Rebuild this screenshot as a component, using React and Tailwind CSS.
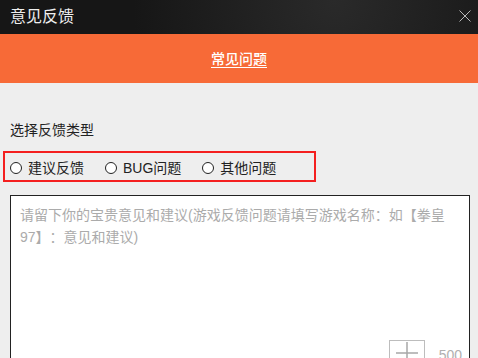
import React from 'react';

const TYPES = ['建议反馈', 'BUG问题', '其他问题'];

const FONT = { fontFamily: '"Liberation Sans", "Noto Sans CJK SC", sans-serif' };

function Radio({ label }) {
  return (
    <label className="flex items-center gap-[6px] text-[14px] leading-[20px] text-[#222]">
      <span className="w-[12px] h-[12px] rounded-full border border-[#222] bg-white" />
      {label}
    </label>
  );
}

export default function App() {
  return (
    <div className="w-[478px] h-[358px] overflow-hidden bg-[#eeeeee]" style={FONT}>
      <div className="h-[34px] flex items-center justify-between pl-[10px] pr-[7px] bg-[radial-gradient(circle_at_70%_0%,#2a2a2a,#161616_60%)]">
        <span className="text-[16px] leading-[20px] text-[#eeeeee]">意见反馈</span>
        <svg width="12" height="12" viewBox="0 0 12 12" className="mb-[2px]">
          <path d="M0.5 0.5 L11.5 11.5 M11.5 0.5 L0.5 11.5" stroke="#b8b8b8" strokeWidth="1" />
        </svg>
      </div>

      <div className="h-[49px] flex items-center justify-center bg-[#f76a37]">
        <span className="text-[14px] leading-[20px] text-white underline underline-offset-[3px] font-medium">
          常见问题
        </span>
      </div>

      <div className="pt-[37px] px-[10px] text-[14px] leading-[20px] text-[#222]">选择反馈类型</div>

      <div className="mt-[11px] ml-[3px] w-[313px] h-[31px] border-2 border-[#f41f1f] flex items-center pl-[5px] pt-[3px] gap-[21px]">
        {TYPES.map((t) => (
          <Radio key={t} label={t} />
        ))}
      </div>

      <div className="mt-[13px] mx-[10px] w-[460px] h-[200px] border border-[#222] bg-white flex flex-col">
        <p className="h-[144px] pt-[8px] pl-[9px] pr-[16px] text-[14px] leading-[22px] text-[#ababab] [text-spacing-trim:space-all]">
          请留下你的宝贵意见和建议(游戏反馈问题请填写游戏名称：如【拳皇97】：意见和建议)
        </p>
        <div className="flex justify-end items-start pr-[7px]">
          <div className="w-[36px] h-[26px] border border-[#bdbdbd] flex items-center justify-center">
            <svg width="22" height="22" viewBox="0 0 22 22">
              <path d="M0 11 H22 M11 0 V22" stroke="#a8a8a8" strokeWidth="1.5" />
            </svg>
          </div>
          <span className="ml-[14px] mt-[5px] text-[14px] leading-[20px] text-[#b0b0b0]">500</span>
        </div>
      </div>
    </div>
  );
}
